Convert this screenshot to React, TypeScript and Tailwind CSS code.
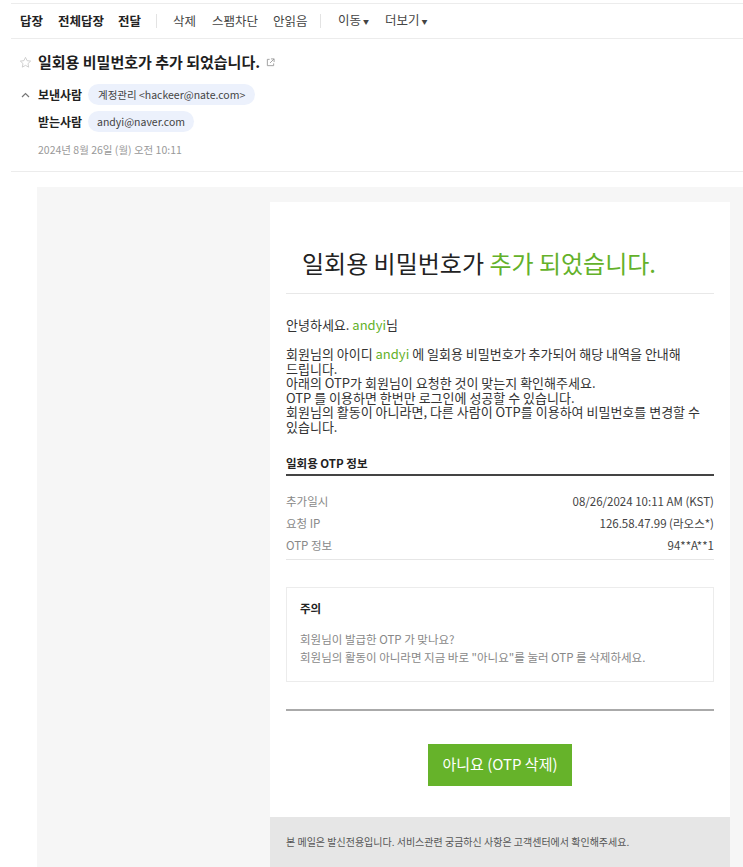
import React from "react";

const font = { fontFamily: '"Noto Sans CJK KR", "Noto Sans", sans-serif' };

function Star() {
  return (
    <svg width="13" height="13" viewBox="0 0 24 24" fill="none" stroke="#c8c8c8" strokeWidth="1.6" strokeLinejoin="round">
      <path d="M12 2.5l2.9 6.1 6.6.8-4.9 4.6 1.3 6.6L12 17.3l-5.9 3.3 1.3-6.6-4.9-4.6 6.6-.8z" />
    </svg>
  );
}

function ExtLink() {
  return (
    <svg width="9" height="9" viewBox="0 0 10 10" fill="none" stroke="#9a9a9a" strokeWidth="1">
      <path d="M4 1.5H1.5v7h7V6" />
      <path d="M5.5 1h3.5v3.5" />
      <path d="M9 1L4.5 5.5" />
    </svg>
  );
}

function Caret() {
  return (
    <svg width="9" height="6" viewBox="0 0 9 6" fill="none" stroke="#777" strokeWidth="1.2">
      <path d="M1 5l3.5-3.5L8 5" />
    </svg>
  );
}

export default function App() {
  return (
    <div className="w-[743px] min-h-[867px] bg-white overflow-hidden text-[#222]" style={font}>
      {/* header */}
      <div className="pt-[3px] pl-[11px]">
        <div className="border-t border-b border-[#ececec] h-[36px] flex items-center pl-[9px] text-[12.5px] leading-[16px] whitespace-nowrap">
          <span className="font-bold text-[#222] w-[38px]">답장</span>
          <span className="font-bold text-[#222] w-[60px]">전체답장</span>
          <span className="font-bold text-[#222] w-[38px]">전달</span>
          <span className="w-px h-[14px] bg-[#e3e3e3]" />
          <span className="text-[#444] ml-[16px] w-[39px]">삭제</span>
          <span className="text-[#444] w-[61px]">스팸차단</span>
          <span className="text-[#444] w-[47px]">안읽음</span>
          <span className="w-px h-[14px] bg-[#e3e3e3]" />
          <span className="text-[#444] ml-[17px] w-[47px]">이동<span className="text-[6px] ml-[2px] align-middle">▼</span></span>
          <span className="text-[#444]">더보기<span className="text-[6px] ml-[2px] align-middle">▼</span></span>
        </div>
        <div className="pl-[8px] pt-[11px]">
          <div className="flex items-center h-[24px]">
            <Star />
            <span className="ml-[6px] text-[15px] font-bold text-[#1e1e1e] leading-[24px]">일회용 비밀번호가 추가 되었습니다.</span>
            <span className="ml-[6px] flex items-center"><ExtLink /></span>
          </div>
          <div className="flex items-center h-[21px] mt-[10px]">
            <span className="w-[19px] flex items-center pl-[2px]"><Caret /></span>
            <span className="text-[12px] font-bold text-[#222] w-[50px]">보낸사람</span>
            <span className="h-[21px] rounded-full bg-[#ecf1fc] px-[10px] flex items-center text-[10.5px] text-[#444]">계정관리 &lt;hackeer@nate.com&gt;</span>
          </div>
          <div className="flex items-center h-[21px] mt-[6px]">
            <span className="w-[19px]" />
            <span className="text-[12px] font-bold text-[#222] w-[50px]">받는사람</span>
            <span className="h-[21px] rounded-full bg-[#ecf1fc] px-[9px] flex items-center text-[10.5px] text-[#444]">andyi@naver.com</span>
          </div>
          <div className="mt-[10px] h-[16px] pl-[19px] text-[10.5px] leading-[16px] text-[#999]">2024년 8월 26일 (월) 오전 10:11</div>
        </div>
        <div className="mt-[13px] border-t border-[#ececec]" />
      </div>

      {/* body */}
      <div className="mt-[15px] ml-[37px] bg-[#f6f6f6] pl-[233px] pr-[13px] pt-[15px]">
        <div className="bg-white">
          <div className="px-[16px]">
            <div className="pt-[46px] pb-[15px] pl-[16px] text-[24px] leading-[30px] text-[#222]">
              일회용 비밀번호가 <span className="text-[#63b12a]">추가 되었습니다.</span>
            </div>
            <div className="border-t border-[#e8e8e8]" />
            <div className="pt-[23px] text-[13px] leading-[15px] text-[#333]">
              안녕하세요. <span className="text-[#63b12a]">andyi</span>님
            </div>
            <div className="mt-[15px] text-[13px] leading-[14.6px] text-[#333]">
              회원님의 아이디 <span className="text-[#63b12a]">andyi</span> 에 일회용 비밀번호가 추가되어 해당 내역을 안내해<br />
              드립니다.<br />
              아래의 OTP가 회원님이 요청한 것이 맞는지 확인해주세요.<br />
              OTP 를 이용하면 한번만 로그인에 성공할 수 있습니다.<br />
              회원님의 활동이 아니라면, 다른 사람이 OTP를 이용하여 비밀번호를 변경할 수<br />
              있습니다.
            </div>
            <div className="mt-[20px] text-[11.5px] font-bold leading-[16px] text-[#222]">일회용 OTP 정보</div>
            <div className="mt-[3px] border-t-2 border-[#444]" />
            <div className="pt-[14px] pb-[3px] text-[11.5px] leading-[22px]">
              <div className="flex justify-between"><span className="text-[#888]">추가일시</span><span className="text-[#444]">08/26/2024 10:11 AM (KST)</span></div>
              <div className="flex justify-between"><span className="text-[#888]">요청 IP</span><span className="text-[#444]">126.58.47.99 (라오스*)</span></div>
              <div className="flex justify-between"><span className="text-[#888]">OTP 정보</span><span className="text-[#444]">94**A**1</span></div>
            </div>
            <div className="border-t border-[#e6e6e6]" />
            <div className="mt-[27px] border border-[#ececec] px-[13px] pt-[12px] pb-[15px]">
              <div className="text-[11.5px] font-bold text-[#222] leading-[16px]">주의</div>
              <div className="mt-[14px] text-[11.5px] leading-[18px] text-[#888]">
                회원님이 발급한 OTP 가 맞나요?<br />
                회원님의 활동이 아니라면 지금 바로 "아니요"를 눌러 OTP 를 삭제하세요.
              </div>
            </div>
            <div className="mt-[27px] border-t-2 border-[#aaaaaa]" />
            <div className="flex justify-center pt-[33px] pb-[31px]">
              <div className="w-[144px] h-[42px] bg-[#66b32a] flex items-center justify-center text-white text-[15px]">
                아니요 (OTP 삭제)
              </div>
            </div>
          </div>
          <div className="bg-[#e6e6e6] h-[60px] px-[16px] pt-[18px] text-[10px] leading-[14px] text-[#555]">
            본 메일은 발신전용입니다. 서비스관련 궁금하신 사항은 고객센터에서 확인해주세요.
          </div>
        </div>
      </div>
    </div>
  );
}
